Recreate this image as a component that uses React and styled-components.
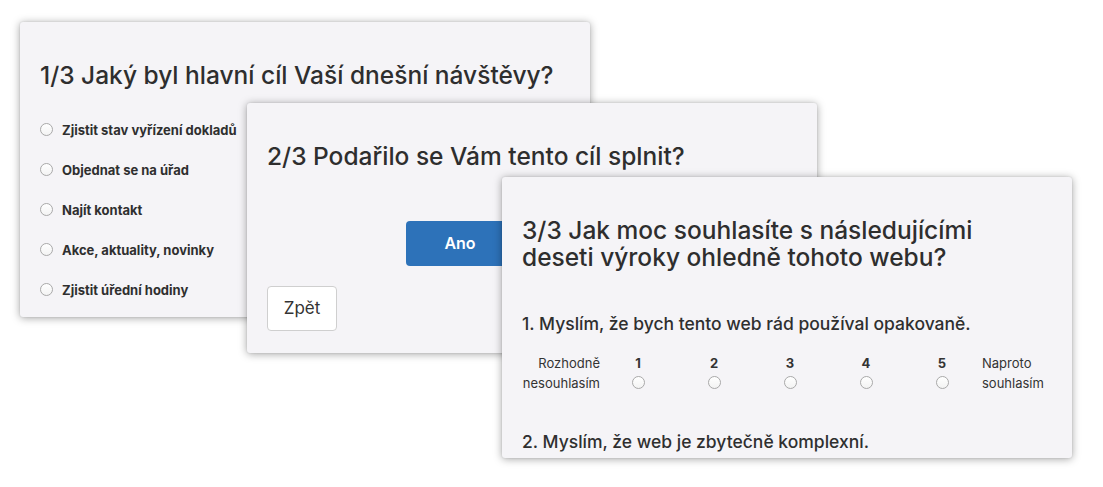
import React from 'react';
import styled, { createGlobalStyle } from 'styled-components';

const GlobalStyle = createGlobalStyle`
  html, body {
    margin: 0;
    padding: 0;
    background: #ffffff;
  }
  body {
    font-family: Inter, "Liberation Sans", Arial, sans-serif;
    color: #333333;
  }
`;

const Stage = styled.div`
  position: relative;
  width: 1103px;
  height: 487px;
  overflow: hidden;
  background: #ffffff;
`;

// the cards lie over each other like windows on a desktop
const Card = styled.section`
  position: absolute;
  left: ${p => p.left}px;
  top: ${p => p.top}px;
  width: 570px;
  height: ${p => p.h}px;
  box-sizing: border-box;
  padding: 40px 20px 20px;
  background: #f5f4f7;
  border-radius: 3px;
  box-shadow: 0 1px 9px rgba(0, 0, 0, 0.36), 0 0 2px rgba(0, 0, 0, 0.12);
  overflow: hidden;
  display: flex;
  flex-direction: column;
`;

const Heading = styled.h2`
  margin: 0;
  padding-right: 12px;
  font-size: 24.5px;
  line-height: 1.1;
  font-weight: 500;
  color: #2e2e2e;
`;

const Options = styled.ul`
  list-style: none;
  margin: 31px 0 0;
  padding: 0;
  display: flex;
  flex-direction: column;
  gap: 20px;
`;

const Option = styled.li`
  display: flex;
  align-items: center;
  gap: 9px;
  height: 20px;
  font-size: 13px;
  font-weight: 700;
  color: #2f2f2f;
`;

const Radio = styled.span`
  display: inline-block;
  width: 13px;
  height: 13px;
  box-sizing: border-box;
  border-radius: 50%;
  border: 1px solid #a9a9a9;
  background: linear-gradient(#ffffff, #f3f3f3);
  flex: none;
`;

const Buttons = styled.div`
  display: flex;
  flex-direction: column;
  align-items: flex-start;
  margin-top: 51px;
  gap: 20px;
`;

const PrimaryButton = styled.button`
  margin-left: 139px;
  width: 108px;
  height: 45px;
  border: none;
  border-radius: 4px;
  background: #2d72b9;
  color: #ffffff;
  font-family: inherit;
  font-size: 16px;
  font-weight: 600;
`;

const BackButton = styled.button`
  width: 70px;
  height: 45px;
  border: 1px solid #cfcfcf;
  border-radius: 4px;
  background: #ffffff;
  color: #333333;
  font-family: inherit;
  font-size: 17px;
`;

const Question = styled.p`
  margin: ${p => p.first ? '38px' : '34px'} 0 0;
  font-size: 17.5px;
  line-height: 30px;
  font-weight: 500;
  color: #2f2f2f;
`;

const Scale = styled.div`
  display: grid;
  grid-template-columns: 78px repeat(5, 76px) auto;
  grid-auto-rows: 20px;
  margin-top: 14px;
  font-size: 13px;
  align-items: center;
`;

const SideLabel = styled.div`
  grid-row: span 2;
  line-height: 20px;
  text-align: ${p => p.align};
  padding-left: ${p => p.align === 'left' ? '2px' : '0'};
  color: #333333;
`;

const Num = styled.div`
  text-align: center;
  font-weight: 700;
  color: #333333;
`;

const Cell = styled.div`
  display: flex;
  justify-content: center;
`;

const goals = [
  'Zjistit stav vyřízení dokladů',
  'Objednat se na úřad',
  'Najít kontakt',
  'Akce, aktuality, novinky',
  'Zjistit úřední hodiny',
];

function LikertScale() {
  const points = [1, 2, 3, 4, 5];
  return (
    <Scale>
      <SideLabel align="right">Rozhodně<br />nesouhlasím</SideLabel>
      {points.map(n => <Num key={n}>{n}</Num>)}
      <SideLabel align="left">Naproto<br />souhlasím</SideLabel>
      {points.map(n => <Cell key={n}><Radio /></Cell>)}
    </Scale>
  );
}

export default function App() {
  return (
    <>
      <GlobalStyle />
      <Stage>
        <Card left={20} top={22} h={295}>
          <Heading>1/3 Jaký byl hlavní cíl Vaší dnešní návštěvy?</Heading>
          <Options>
            {goals.map(g => (
              <Option key={g}><Radio />{g}</Option>
            ))}
          </Options>
        </Card>

        <Card left={247} top={103} h={250}>
          <Heading>2/3 Podařilo se Vám tento cíl splnit?</Heading>
          <Buttons>
            <PrimaryButton>Ano</PrimaryButton>
            <BackButton>Zpět</BackButton>
          </Buttons>
        </Card>

        <Card left={502} top={177} h={281}>
          <Heading>3/3 Jak moc souhlasíte s následujícími deseti výroky ohledně tohoto webu?</Heading>
          <Question first>1. Myslím, že bych tento web rád používal opakovaně.</Question>
          <LikertScale />
          <Question>2. Myslím, že web je zbytečně komplexní.</Question>
        </Card>
      </Stage>
    </>
  );
}
